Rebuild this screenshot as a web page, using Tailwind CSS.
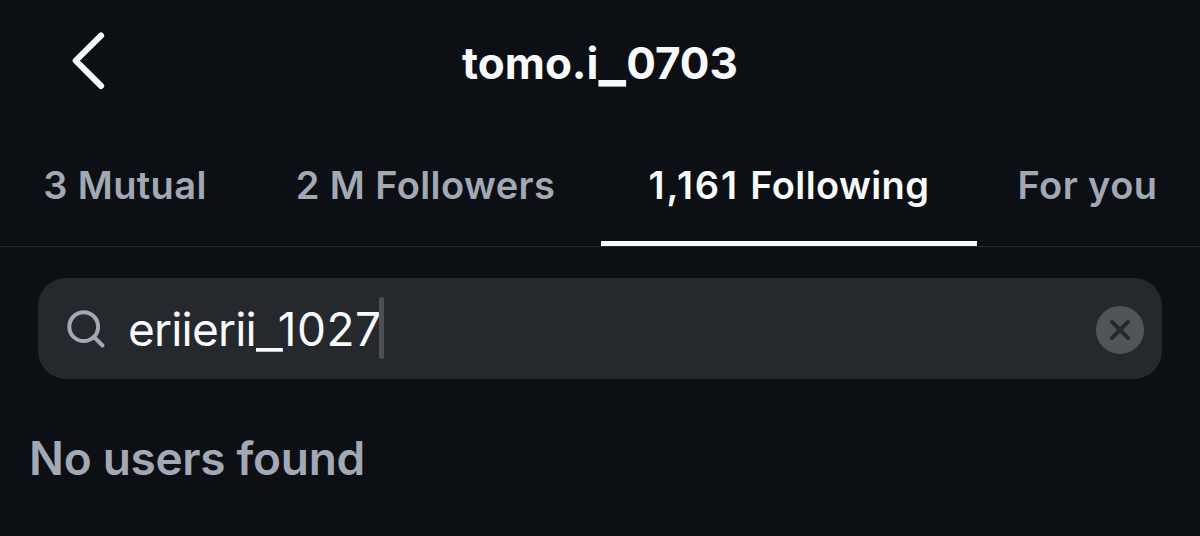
<!DOCTYPE html>
<html lang="en">
  <head>
    <meta charset="UTF-8" />
    <meta name="viewport" content="width=device-width, initial-scale=1.0" />
    <title>tomo.i_0703</title>
    <!-- Tailwind -->
    <script src="https://cdn.jsdelivr.net/npm/@tailwindcss/browser@4"></script>
  </head>
  <body
    class="h-[536px] overflow-hidden bg-[#0c1014] font-['Inter',sans-serif] text-[#f8f9fb]"
  >
    <!-- Header start -->
    <header class="grid h-[126px] grid-cols-[200px_1fr_200px] items-center">
      <button type="button" aria-label="Back" class="pl-[68px]">
        <svg
          class="h-[64px] w-[40px]"
          viewBox="0 0 40 64"
          fill="none"
          stroke="currentColor"
          stroke-width="6"
          stroke-linecap="round"
          stroke-linejoin="round"
        >
          <path d="M33.1 4.5L7.7 29.7L33.1 55" />
        </svg>
      </button>
      <h1 class="text-center text-[44px] leading-none font-bold">
        tomo.i<span class="align-[-1px] text-[58px] leading-0">_</span>0703
      </h1>
    </header>
    <!-- Header end -->
    <!-- Tabs start -->
    <nav
      class="grid h-[121px] grid-cols-[250px_351px_376px_223px] border-b border-[#25282d] text-[38px] leading-none font-semibold tracking-[0.4px] whitespace-nowrap text-[#a2a9b4]"
    >
      <button type="button" class="pb-[2px]">3 Mutual</button>
      <button type="button" class="pb-[2px]">2 M Followers</button>
      <button
        type="button"
        class="border-b-5 border-[#f8f9fb] pt-[3px] text-[#f8f9fb]"
      >
        <span class="tracking-[1.8px]">1,161 </span>Following
      </button>
      <button type="button" class="pr-[2px] pb-[2px]">For you</button>
    </nav>
    <!-- Tabs end -->
    <!-- Search start -->
    <div class="px-[38px] pt-[31px]">
      <div
        class="flex h-[101px] items-center rounded-[28px] bg-[#25282d] pr-[18px] pl-[28px]"
      >
        <svg
          class="h-[40px] w-[40px] shrink-0 text-[#a2a9b4]"
          viewBox="0 0 40 40"
          fill="none"
          stroke="currentColor"
          stroke-width="4"
          stroke-linecap="round"
        >
          <circle cx="17.7" cy="17.7" r="14.4" />
          <path d="M28 28L36.5 36.5" />
        </svg>
        <p class="ml-[22px] text-[46px] leading-none">
          <span class="tracking-[-0.8px]">eriierii</span
          ><span
            class="align-[-2px] text-[60px] leading-0 font-light tracking-[-5px]"
            >_</span
          ><span class="tracking-[0.5px]">1027</span>
        </p>
        <span
          class="-ml-[3px] mb-px h-[62px] w-[5px] rounded-full bg-[#4b4e53]"
        ></span>
        <button type="button" aria-label="Clear" class="mt-[3px] ml-auto">
          <svg class="h-[48px] w-[48px]" viewBox="0 0 48 48" fill="none">
            <circle cx="24" cy="24" r="24" fill="#515459" />
            <path
              d="M16 16L32 32M32 16L16 32"
              stroke="#25282d"
              stroke-width="4"
              stroke-linecap="round"
            />
          </svg>
        </button>
      </div>
    </div>
    <!-- Search end -->
    <!-- Results start -->
    <p
      class="mt-[56px] ml-[29px] text-[46px] leading-none font-semibold tracking-[-0.3px] text-[#a2a9b4]"
    >
      No users found
    </p>
    <!-- Results end -->
  </body>
</html>
